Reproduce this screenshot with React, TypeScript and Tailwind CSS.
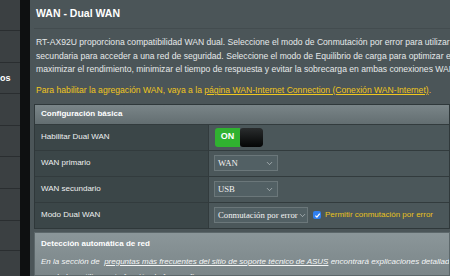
import { ChevronDown } from "lucide-react";

const font = "font-['Liberation_Sans',Arial,sans-serif]";
const serif = "font-['Liberation_Serif','Times_New_Roman',serif]";

function Select({ value, w }: { value: string; w: string }) {
  return (
    <div
      className={`flex h-[16px] shrink-0 items-center justify-between border border-[#6b777a] bg-[#526064] pl-[3px] pr-[3px] ${w}`}
    >
      <span className={`${serif} whitespace-nowrap text-[8.7px] leading-none text-[#f2f2f2]`}>{value}</span>
      <ChevronDown className="size-[9px] shrink-0 text-[#d0d6d8]" strokeWidth={1.6} />
    </div>
  );
}

function Row({ label, children }: { label: string; children: React.ReactNode }) {
  return (
    <div className="flex h-[26px] border-t border-[#323b3d]">
      <div className="flex w-[173px] items-center bg-[#3b4648] pl-[6px] text-[8px] text-[#eef0f0]">
        {label}
      </div>
      <div className="flex flex-1 items-center gap-[4px] whitespace-nowrap border-l border-[#323b3d] bg-[#4b575a] pl-[5px]">
        {children}
      </div>
    </div>
  );
}

export default function App() {
  const sideLines = [30, 62, 93, 125, 156, 188, 220, 250];
  return (
    <div className={`flex h-[276px] w-[450px] overflow-hidden bg-[#0e1011] ${font}`}>
      {/* sidebar */}
      <div className="relative w-[20px] shrink-0 bg-[#3b4042]">
        {sideLines.map((y) => (
          <div key={y} className="absolute left-0 h-px w-full bg-[#2a2e30]" style={{ top: y }} />
        ))}
        <span className="absolute left-0 top-[72px] text-[9px] font-bold text-white">os</span>
      </div>
      <div className="w-[10px] shrink-0 bg-[#0e1011]" />

      {/* main */}
      <div className="flex min-w-0 flex-1 flex-col bg-[#4b5558] pl-[4px]">
        <div className="flex h-[29px] shrink-0 items-center border-b border-[#434c4f] pl-[2px] text-[10.5px] font-bold text-white">
          WAN - Dual WAN
        </div>
        <div className="shrink-0 whitespace-nowrap pl-[2px] pt-[7px] text-[8.6px] leading-[13.5px] text-[#e6e9ea]">
          <p>RT-AX92U proporciona compatibilidad WAN dual. Seleccione el modo de Conmutación por error para utilizar</p>
          <p>secundaria para acceder a una red de seguridad. Seleccione el modo de Equilibrio de carga para optimizar el</p>
          <p>maximizar el rendimiento, minimizar el tiempo de respuesta y evitar la sobrecarga en ambas conexiones WAN.</p>
          <p className="mt-[7.5px] text-[#f0c61e]">
            Para habilitar la agregación WAN, vaya a la{" "}
            <span className="underline">página WAN-Internet Connection (Conexión WAN-Internet)</span>.
          </p>
        </div>

        {/* table */}
        <div className="mt-[6px] shrink-0 border border-[#2f383a]">
          <div className="flex h-[19px] items-center bg-gradient-to-b from-[#7a8588] to-[#636e71] pl-[6px] text-[8px] font-bold text-white">
            Configuración básica
          </div>
          <Row label="Habilitar Dual WAN">
            <div className="ml-[1px] flex h-[19px] items-stretch overflow-hidden rounded-[3px]">
              <div className="flex w-[25px] items-center justify-center bg-[#30b230] text-[9px] font-bold text-white">
                ON
              </div>
              <div className="w-[23px] rounded-[3px] bg-gradient-to-b from-[#2a2d2e] to-[#050606]" />
            </div>
          </Row>
          <Row label="WAN primario">
            <Select value="WAN" w="w-[64px]" />
          </Row>
          <Row label="WAN secundario">
            <Select value="USB" w="w-[64px]" />
          </Row>
          <Row label="Modo Dual WAN">
            <Select value="Conmutación por error" w="w-[94px]" />
            <div className="ml-[1px] flex size-[8px] shrink-0 items-center justify-center rounded-[2px] bg-[#2f7ff0]">
              <svg viewBox="0 0 10 10" className="size-[7px]">
                <path d="M2 5.2 L4.2 7.4 L8.2 2.4" fill="none" stroke="white" strokeWidth="1.8" />
              </svg>
            </div>
            <span className="text-[8px] text-[#e9c21c]">Permitir conmutación por error</span>
          </Row>
        </div>

        {/* bottom section */}
        <div className="mt-[3px] min-h-0 flex-1 overflow-hidden border border-[#5c676a] bg-gradient-to-b from-[#8b9699] to-[#7b8689] pl-[6px]">
          <div className="pt-[6px] text-[8px] font-bold leading-[9px] text-white">Detección automática de red</div>
          <div className="mt-[6px] whitespace-nowrap text-[8px] italic leading-[15px] text-[#f4f6f6]">
            <p>
              En la sección de&nbsp;&nbsp;
              <span className="underline">preguntas más frecuentes del sitio de soporte técnico de ASUS</span>{" "}
              encontrará explicaciones detalladas
            </p>
            <p>ayudarle a utilizar esta función de forma eficaz.</p>
          </div>
        </div>
      </div>
    </div>
  );
}
